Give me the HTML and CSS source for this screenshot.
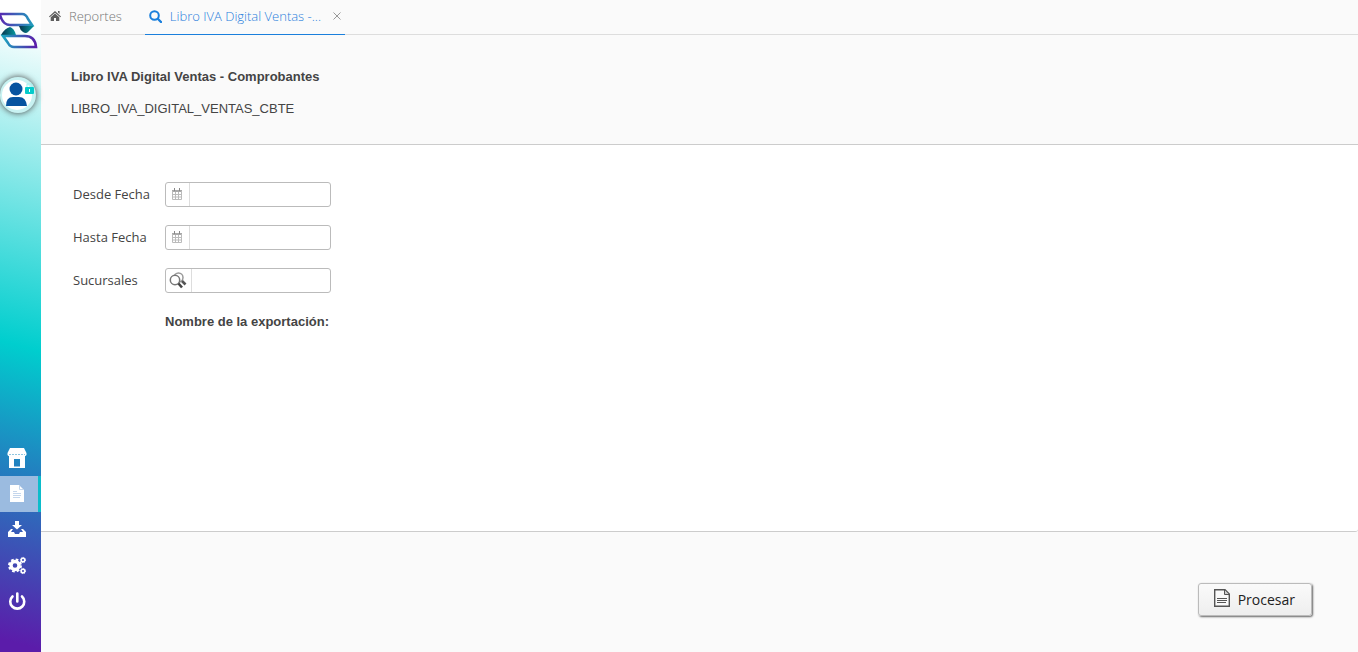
FILE: index.html
```html
<!doctype html>
<html lang="es">
<head>
	<meta charset="UTF-8">
	<title>Libro IVA Digital Ventas - Comprobantes</title>
	<link rel="stylesheet" href="styles.css">
</head>
<body>
	<nav class="sidebar">
		<a class="logo" href="#" aria-label="Inicio">
			<svg width="38" height="38" viewBox="0 0 38 38">
				<defs>
					<linearGradient id="top" x1="0" y1="0" x2="1" y2="0">
						<stop offset="0" stop-color="#5a22b0"/>
						<stop offset="1" stop-color="#2399bd"/>
					</linearGradient>
					<linearGradient id="low" x1="0" y1="0" x2="1" y2="0">
						<stop offset="0" stop-color="#1ba5bf"/>
						<stop offset="1" stop-color="#5a1caa"/>
					</linearGradient>
					<linearGradient id="dark" x1="0" y1="0" x2="1" y2="0">
						<stop offset="0" stop-color="#04344c"/>
						<stop offset="1" stop-color="#079aa0"/>
					</linearGradient>
				</defs>
				<path d="M-2 2H22Q26 2 28 7L32 13H10Q3 13 0 3Z" fill="#fff" stroke="url(#top)" stroke-width="2.600"/>
				<path d="M19 14H34L28 20Q26 22 23 20Q20 18 19 14Z" fill="url(#dark)"/>
				<path d="M1 23Q5 16 10 15Q14 16 16 23Z" fill="url(#dark)"/>
				<path d="M3 24H25Q35 24 36 35H14Q10 35 8 31Z" fill="#fff" stroke="url(#low)" stroke-width="2.600"/>
			</svg>
		</a>
		<button class="avatar" type="button" aria-label="Usuario">
			<svg width="36" height="36" viewBox="0 0 36 36">
				<circle cx="17" cy="18" r="15" fill="#fff"/>
				<circle cx="16" cy="12" r="6.500" fill="#0753a0"/>
				<path d="M6 29Q6 20 13 20H19Q26 20 27 29Z" fill="#0753a0"/>
				<path d="M27 10V7H32V10" fill="none" stroke="#a5eeee"/>
				<rect x="25" y="10" width="9" height="7" rx="1" fill="#06cbcb"/>
				<path d="M29 12H30V15H29Z" fill="#fff"/>
			</svg>
		</button>
		<ul class="menu">
			<li><a href="#" aria-label="Comercio">
				<svg width="20" height="20" viewBox="0 0 20 20" fill="#fff">
					<path d="M3 0H17L19.500 5V7Q18 9 16 8Q14 9 13 8Q11 9 10 8Q8 9 7 8Q5 9 4 8Q2 9 .5 7V5Z"/>
					<path fill-rule="evenodd" d="M2 8H18V20H2ZM7 11H13V18.500H7Z"/>
					<path d="M2 6.500H18" stroke="#8fc6e0" stroke-dasharray="2 1"/>
				</svg>
			</a></li>
			<li class="current"><a href="#" aria-label="Reportes">
				<svg width="20" height="20" viewBox="0 0 20 20">
					<path d="M3 1H12L17 6V18H3Z" fill="#fff"/>
					<path d="M12.500 1V5.500H17" fill="none" stroke="#c4d6ec"/>
					<path d="M6 7.500H10M6 9.500H14M6 11.500H14M6 13.500H13" fill="none" stroke="#c4d6ec"/>
				</svg>
			</a></li>
			<li><a href="#" aria-label="Descargas">
				<svg width="20" height="20" viewBox="0 0 20 20" fill="#fff">
					<path d="M8 1H12V5H15L10 9.500L5 5H8Z"/>
					<path d="M4 9L1 12V17H19V12L16 9H14L16 12H13L12 14H8L7 12H4L6 9Z"/>
				</svg>
			</a></li>
			<li><a href="#" aria-label="Configuración">
				<svg width="20" height="20" viewBox="0 0 20 20" fill="none" stroke="#fff">
					<circle cx="8" cy="9.500" r="4" stroke-width="3.400"/>
					<circle cx="8" cy="9.500" r="6" stroke-width="2" stroke-dasharray="2.7 2.01"/>
					<circle cx="16" cy="4" r="1.800" stroke-width="1.500"/>
					<circle cx="16" cy="4" r="2.600" stroke-dasharray="1.1 .94"/>
					<circle cx="16" cy="15" r="1.800" stroke-width="1.500"/>
					<circle cx="16" cy="15" r="2.600" stroke-dasharray="1.1 .94"/>
				</svg>
			</a></li>
			<li><a href="#" aria-label="Salir">
				<svg width="20" height="20" viewBox="0 0 20 20" fill="none" stroke="#fff" stroke-width="2.600" stroke-linecap="round">
					<path d="M5.500 4.500A7 7 0 1 0 15 4.500M10.300 1.500V9.500"/>
				</svg>
			</a></li>
		</ul>
	</nav>
	<div class="page">
		<header class="tabs">
			<a class="tab" href="#">
				<svg width="12" height="12" viewBox="0 0 12 12" fill="#5d5d5d">
					<path d="M6 1L12 6.500L11.300 7.300L6 2.700L.7 7.300L0 6.500ZM9 1H10.600V4L9 2.600Z"/>
					<path d="M6 3.500L10.300 7.200V11H7V8H5V11H1.700V7.200Z"/>
				</svg>
				Reportes
			</a>
			<div class="tab active">
				<svg width="13" height="13" viewBox="0 0 13 13" fill="none" stroke="#1a7fdc">
					<circle cx="5.500" cy="5.500" r="4.300" stroke-width="2"/>
					<path d="M9 9L12 12" stroke-width="2.400" stroke-linecap="round"/>
				</svg>
				<a href="#">Libro IVA Digital Ventas -...</a>
				<button class="close" type="button" aria-label="Cerrar">
					<svg width="8" height="8" viewBox="0 0 8 8" stroke="#999"><path d="M.5 .5L7.500 7.500M7.500 .5L.5 7.500"/></svg>
				</button>
			</div>
		</header>
		<section class="heading">
			<h1>Libro IVA Digital Ventas - Comprobantes</h1>
			<p>LIBRO_IVA_DIGITAL_VENTAS_CBTE</p>
		</section>
		<form class="filters" id="filters">
			<label for="desde">Desde Fecha</label>
			<div class="field">
				<button type="button" aria-label="Elegir desde fecha">
					<svg width="12" height="12" viewBox="0 0 12 12" fill="none">
						<path d="M1 2H11V4H1Z" fill="#aaa"/>
						<path d="M3.500 0V3M8.500 0V3" stroke="#888"/>
						<path d="M1.500 3V11.500H10.500V3M4.500 4V11M7.500 4V11M1 6.500H11M1 9H11" stroke="#bbb"/>
					</svg>
				</button>
				<input type="text" id="desde">
			</div>
			<label for="hasta">Hasta Fecha</label>
			<div class="field">
				<button type="button" aria-label="Elegir hasta fecha">
					<svg width="12" height="12" viewBox="0 0 12 12" fill="none">
						<path d="M1 2H11V4H1Z" fill="#aaa"/>
						<path d="M3.500 0V3M8.500 0V3" stroke="#888"/>
						<path d="M1.500 3V11.500H10.500V3M4.500 4V11M7.500 4V11M1 6.500H11M1 9H11" stroke="#bbb"/>
					</svg>
				</button>
				<input type="text" id="hasta">
			</div>
			<label for="sucursales">Sucursales</label>
			<div class="field search">
				<button type="button" aria-label="Buscar sucursales">
					<svg width="18" height="18" viewBox="0 0 18 18" fill="none">
						<circle cx="9.500" cy="6.500" r="4.500" stroke="#999" stroke-width="1.500"/>
						<path d="M13 10L16.500 13.500" stroke="#555" stroke-width="2.600"/>
						<circle cx="6" cy="9" r="4.700" fill="#fff" stroke="#777" stroke-width="1.500"/>
						<path d="M9.500 12.500L13 16.500" stroke="#444" stroke-width="2.600"/>
					</svg>
				</button>
				<input type="text" id="sucursales">
			</div>
			<strong class="export">Nombre de la exportación:</strong>
		</form>
		<footer class="actions">
			<button class="process" type="submit" form="filters">
				<svg width="16" height="22" viewBox="0 0 16 22" fill="none" stroke="#555">
					<path d="M.7 .7H11L15.300 5V17.300H.7Z" fill="#fafafa" stroke-width="1.400"/>
					<path d="M10.500 1V5.500H15" fill="#ccc"/>
					<path d="M3 9.500H13M3 11.500H13M3 13.500H12"/>
				</svg>
				Procesar
			</button>
		</footer>
	</div>
</body>
</html>
```

FILE: styles.css
```css
*{
	margin:0;
	padding:0;
	box-sizing:border-box;
}
ul,li{
	list-style:none;
}
a{
	color:inherit;
	text-decoration:none;
}
svg{
	display:block;
	flex:none;
}
button{
	border:0;
	background:none;
	cursor:pointer;
}
body{
	display:flex;
	min-height:100vh;
	background:#fafafa;
	color:#444;
	font:13px/16px "Open Sans",sans-serif;
}
.sidebar{
	flex:none;
	display:flex;
	flex-direction:column;
	width:41px;
	padding:12px 0 32px;
	background:linear-gradient(195deg,#fff 4%,#00cece 53%,#2182c0 71%,#5b1caa 98%);
}
.avatar{
	width:36px;
	height:36px;
	margin-top:27px;
	border-radius:50%;
	background:#c8f2f2;
	box-shadow:0 0 6px #444;
}
.menu{
	margin-top:auto;
}
.menu a{
	display:flex;
	align-items:center;
	height:36px;
	padding-left:7px;
}
.menu .current a{
	border-right:3px solid #0bbccb;
	background:#9bbbe0;
}
.page{
	flex:1;
	display:flex;
	flex-direction:column;
	min-width:0;
}
.tabs{
	display:flex;
	gap:15px;
	height:35px;
	border-bottom:1px solid #ddd;
}
.tab{
	display:flex;
	align-items:center;
	gap:8px;
	height:35px;
	padding:0 8px 3px;
	color:#777;
	font-weight:300;
}
.tab.active{
	min-width:200px;
	padding:0 4px 2px;
	border-bottom:1px solid #1a7fdc;
	color:#2a80dc;
}
.close{
	margin-left:auto;
}
.heading{
	height:110px;
	padding:34px 30px 0;
	border-bottom:1px solid #ccc;
	font-family:"Liberation Sans",Arial,sans-serif;
}
.heading h1{
	margin-bottom:16px;
	font-size:13px;
}
.filters{
	flex:1;
	display:grid;
	grid-template-columns:74px 166px;
	align-content:start;
	align-items:center;
	gap:18px;
	padding:37px 32px;
	border-bottom:1px solid #ccc;
	border-radius:0 0 3px 0;
	background:#fff;
}
.filters label{
	padding-bottom:2px;
	white-space:nowrap;
}
.field{
	display:flex;
	height:25px;
	border:1px solid #bbb;
	border-radius:3px;
}
.field button{
	flex:none;
	display:flex;
	align-items:center;
	justify-content:center;
	width:24px;
	padding:0 2px 1px 0;
	border-right:1px solid #ddd;
}
.search button{
	width:26px;
}
.field input{
	flex:1;
	min-width:0;
	padding:0 4px;
	border:0;
	background:none;
	font:inherit;
}
.export{
	grid-column:2;
	padding-top:3px;
	font-family:"Liberation Sans",Arial,sans-serif;
}
.actions{
	display:flex;
	justify-content:flex-end;
	align-items:flex-start;
	height:120px;
	padding:51px 46px 0;
}
.process{
	display:flex;
	align-items:center;
	gap:8px;
	height:33px;
	padding:0 16px 0 15px;
	border:1px solid #bbb;
	border-radius:3px;
	background:linear-gradient(#fafafa,#eee);
	box-shadow:1px 1px 2px #666;
	color:#222;
	font:14px/20px "Open Sans",sans-serif;
}
```
